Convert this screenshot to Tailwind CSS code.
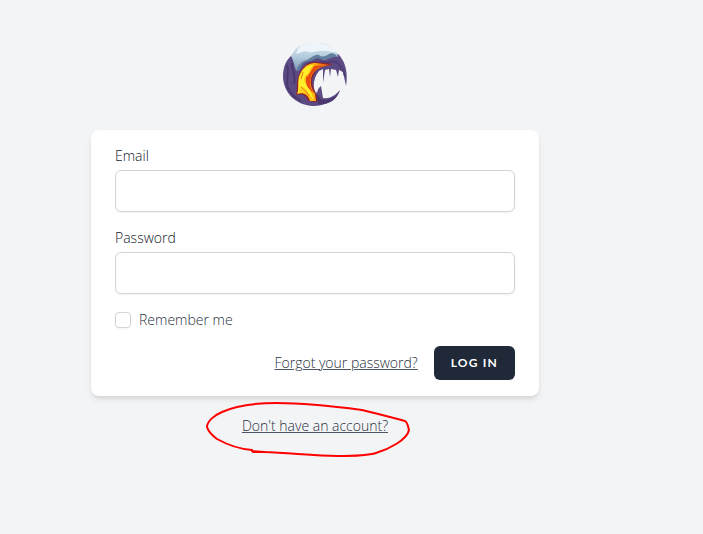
<!DOCTYPE html>
<html lang="en">
<head>
<meta charset="utf-8">
<meta name="viewport" content="width=device-width, initial-scale=1">
<title>Log in</title>
<script src="https://cdn.jsdelivr.net/npm/@tailwindcss/browser@4"></script>
</head>
<body class="bg-[#f3f4f6] font-['Open_Sans','Lato',sans-serif] text-gray-900">
<main class="flex min-h-screen flex-col items-center pt-[42px] pr-[73px]">
  <a href="#" aria-label="Home">
    <svg class="block size-16" viewBox="0 0 64 64" aria-hidden="true">
      <defs>
        <linearGradient id="ice" x1="0" y1="0" x2="0" y2="1"><stop offset="0" stop-color="#dcebf4"/><stop offset=".5" stop-color="#b3cbdc"/><stop offset="1" stop-color="#7896b2"/></linearGradient>
        <linearGradient id="fire" x1="0" y1="0" x2="1" y2="0"><stop offset="0" stop-color="#ffdf20"/><stop offset=".5" stop-color="#ffb510"/><stop offset="1" stop-color="#d83b16"/></linearGradient>
      </defs>
      <path d="M9 13C3 18 0 25 0 34C0 50 12 63 30 64C44 64 54 57 57 48C52 54 46 57 40 56L38 44C35 46 34 49 34 53C29 47 30 36 36 29L40 27L40 41L42 28L46 27L47 35L48 27L53 28L55 35L56 28L60 30L63 44C65 31 63 20 55 12L40 14L20 18Z" fill="#5c4a82"/>
      <path d="M4 23C7 31 2 38 5 46C8 53 13 56 18 59M9 21C8 29 14 33 11 42" fill="none" stroke="#4a3970" stroke-width="2"/>
      <path d="M24 22C28 19 33 22 38 20C44 22 48 18 53 20C58 24 61 28 62 34" fill="none" stroke="#4f3e76" stroke-width="2"/>
      <path d="M8 14C11 10 12 5 18 4C23 0 29 1 34 1C43 0 50 5 54 11L55 15C50 12 47 16 42 18C38 18 37 14 32 16C27 20 21 18 19 23C17 26 16 29 14 29C11 26 12 21 8 14Z" fill="url(#ice)"/>
      <path d="M18 21C20 18 24 19 27 16C31 14 33 12 36 13C39 16 43 14 46 12C50 10 52 12 55 15C50 14 47 17 42 18C38 18 37 15 32 17C27 21 21 18 19 23C17 26 16 29 14 29C13 26 16 23 18 21Z" fill="#637f9f"/>
      <path d="M15 7C20 1 30 0 40 2C48 4 52 7 54 10C48 11 46 8 40 9C34 8 32 11 26 10C21 8 18 11 13 12Z" fill="#edf5fa"/>
      <path d="M17 30C21 23 26 20 33 20L51 22C41 24 34 26 31 32C27 39 30 46 34 53L34 60L25 59C23 53 19 51 13 53C15 47 12 39 17 30Z" fill="#8f2230"/>
      <path d="M18 30C22 23 27 21 33 21L48 23C38 24 32 27 29 33C26 41 28 46 32 52L33 59L27 59C25 52 20 50 14 52C17 45 13 38 18 30Z" fill="url(#fire)"/>
      <path d="M31 24L43 23C34 25 30 29 28 35C26 43 28 47 31 51C25 48 22 42 23 35C25 35 28 29 31 24Z" fill="#e94a12"/>
      <path d="M19 30C22 25 26 23 31 23C26 26 27 31 22 34C19 40 24 44 27 48L31 58C27 55 25 47 18 44L15 50C17 43 14 37 19 30Z" fill="#ffef2b"/>
      <path d="M18 45C21 48 24 50 26 54M20 30L18 37" fill="none" stroke="#ee7412" stroke-width="1"/>
      <path d="M33 49C36 55 37 58 43 58C49 57 54 54 57 48C54 58 46 63 35 62Z" fill="#49376e"/>
    </svg>
  </a>

  <section class="mt-6 w-full max-w-md rounded-lg bg-white px-6 py-4 shadow-[0_4px_6px_-1px_rgba(0,0,0,0.1),0_2px_4px_-1px_rgba(0,0,0,0.06)]">
    <form>
      <div>
        <label for="email" class="block text-sm font-light text-[#111827]">Email</label>
        <input id="email" type="email" class="mt-1 block h-[42px] w-full rounded-md border border-[#d1d5db] bg-white px-3 py-2 shadow-[0_1px_2px_rgba(0,0,0,0.05)]">
      </div>
      <div class="mt-4">
        <label for="password" class="block text-sm font-light text-[#111827]">Password</label>
        <input id="password" type="password" class="mt-1 block h-[42px] w-full rounded-md border border-[#d1d5db] bg-white px-3 py-2 shadow-[0_1px_2px_rgba(0,0,0,0.05)]">
      </div>
      <div class="mt-4">
        <label for="remember" class="flex items-center">
          <input id="remember" type="checkbox" class="size-4 appearance-none rounded border border-[#d1d5db] bg-white shadow-[0_1px_2px_rgba(0,0,0,0.05)] checked:bg-indigo-600">
          <span class="ml-2 text-sm font-light text-[#27303d]">Remember me</span>
        </label>
      </div>
      <div class="mt-4 flex items-center justify-end">
        <a href="#" class="text-sm font-light text-[#27303d] underline decoration-[#4b5563]">Forgot your password?</a>
        <button type="submit" class="ml-4 rounded-md border border-transparent bg-[#1f2937] px-4 py-2 font-['Lato',sans-serif] text-xs font-bold tracking-widest text-white uppercase">Log in</button>
      </div>
    </form>
  </section>

  <div class="relative mt-5">
    <a href="#" class="block text-sm font-light text-[#27303d] underline decoration-[#4b5563]">Don't have an account?</a>
    <svg class="pointer-events-none absolute top-1/2 left-1/2 h-[60px] w-[210px] -translate-x-[112px] -translate-y-[26px]" viewBox="203 400 210 60" fill="none" stroke="#ff0000" stroke-width="2" stroke-linecap="round" stroke-linejoin="round" aria-hidden="true">
      <path d="M252 451L264 452C291 453 315 456 337 456C353 456 367 456 376 453C389 449 407 440 409 430C408 427 408 423 405 421C390 417 379 414 362 410C332 406 304 403 277 403C257 403 235 406 222 412C215 415 207 421 207 427C208 431 213 436 217 439C226 444 238 449 252 450"/>
      <path d="M253 452H265"/>
    </svg>
  </div>
</main>
</body>
</html>
